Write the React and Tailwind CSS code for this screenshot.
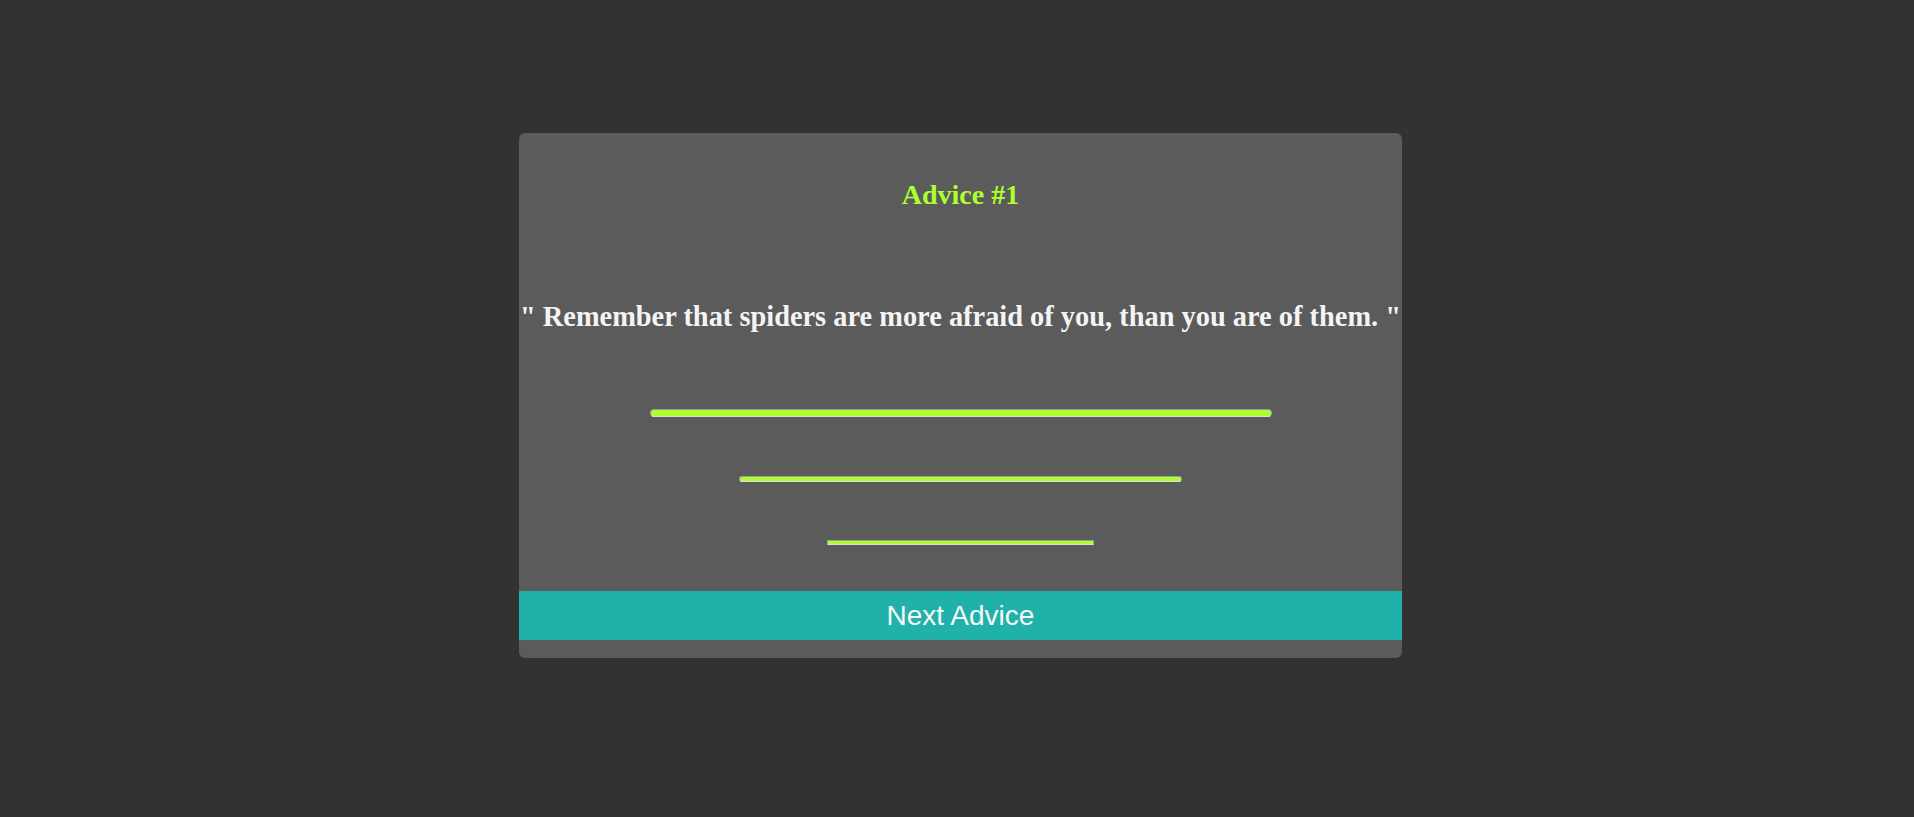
export default function App() {
  return (
    <div className="min-h-[817px] w-full bg-[#323232] pt-[133px]">
      <div className="ml-[519px] flex w-[883px] flex-col items-center rounded-[6px] bg-[#5b5b5b] pb-[18px] pt-[46px]">
        <h2 className="font-['Liberation_Serif',serif] text-[28px] font-bold leading-[32px] text-[#adff2f]">
          Advice #1
        </h2>
        <p className="mt-[90px] whitespace-nowrap font-['Liberation_Serif',serif] text-[28.4px] font-bold leading-[32px] text-[#f4f4f4]">
          " Remember that spiders are more afraid of you, than you are of them. "
        </p>
        <div className="mt-[76px] h-[8px] w-[622px] rounded-full border border-[#9c9c9c] border-b-[#dedede] bg-[#adff2f]" />
        <div className="mt-[59px] h-[6px] w-[443px] rounded-full border border-[#9c9c9c] border-b-[#dedede] bg-[#adff2f]" />
        <div className="mt-[58px] h-[5px] w-[267px] border border-[#9c9c9c] border-b-[#dedede] bg-[#adff2f]" />
        <button className="mt-[46px] flex h-[49px] w-full items-center justify-center bg-[#20b2aa] font-['Liberation_Sans',Arial,sans-serif] text-[28px] text-[#f8f8f8]">
          Next Advice
        </button>
      </div>
    </div>
  );
}
